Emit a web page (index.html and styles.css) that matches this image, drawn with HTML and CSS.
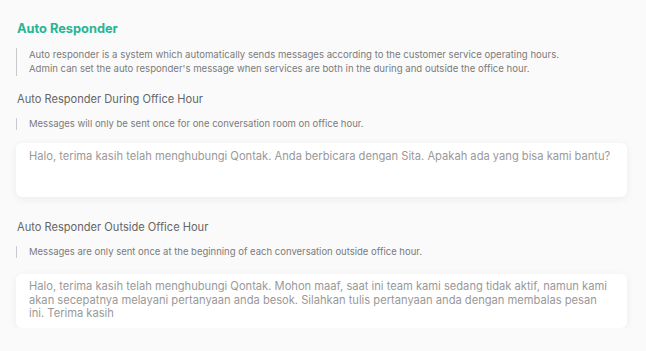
FILE: index.html
```html
<!DOCTYPE html>
<html>
<head>
<meta charset="utf-8">
<link rel="stylesheet" href="styles.css">
</head>
<body>
<div class="page">
  <h1 class="title">Auto Responder</h1>
  <div class="note note-main">
    <p>Auto responder is a system which automatically sends messages according to the customer service operating hours.</p>
    <p>Admin can set the auto responder's message when services are both in the during and outside the office hour.</p>
  </div>

  <section class="section section-first">
    <h2 class="section-title">Auto Responder During Office Hour</h2>
    <div class="note note-small">Messages will only be sent once for one conversation room on office hour.</div>
    <div class="card card-first">Halo, terima kasih telah menghubungi Qontak. Anda berbicara dengan Sita. Apakah ada yang bisa kami bantu?</div>
  </section>

  <section class="section section-second">
    <h2 class="section-title">Auto Responder Outside Office Hour</h2>
    <div class="note note-small">Messages are only sent once at the beginning of each conversation outside office hour.</div>
    <div class="card card-second">Halo, terima kasih telah menghubungi Qontak. Mohon maaf, saat ini team kami sedang tidak aktif, namun kami akan secepatnya melayani pertanyaan anda besok. Silahkan tulis pertanyaan anda dengan membalas pesan ini. Terima kasih</div>
  </section>
</div>
</body>
</html>
```

FILE: styles.css
```css
html, body {
  margin: 0;
  padding: 0;
  background: #fafafa;
  font-family: Inter, "Noto Sans", sans-serif;
}

.page {
  padding: 21px 19px 0 16px;
}

.title {
  margin: 0 0 0 1px;
  font-size: 12.8px;
  line-height: 16px;
  font-weight: 700;
  color: #27b595;
}

.note {
  border-left: 1.5px solid #c9c9c9;
  padding-left: 12px;
  color: #7a7a7a;
}

.note p {
  margin: 0;
}

.note-main {
  margin-top: 11px;
  font-size: 9.6px;
  line-height: 14px;
}

.section-first {
  margin-top: 15px;
}

.section-second {
  margin-top: 22px;
}

.section-title {
  margin: 0 0 0 1px;
  font-size: 11.1px;
  line-height: 16px;
  font-weight: 400;
  color: #666;
}

.note-small {
  margin-top: 11px;
  font-size: 9.5px;
  line-height: 12px;
}

.card {
  background: #fff;
  border-radius: 6px;
  box-shadow: 0 2px 8px rgba(0, 0, 0, 0.06);
  padding: 7px 14px 7px 13px;
  font-size: 11.15px;
  line-height: 13.5px;
  color: #999;
}

.card-first {
  margin-top: 13px;
  height: 40px;
}

.card-second {
  margin-top: 16px;
  padding-top: 6px;
  padding-bottom: 7.5px;
}
```
